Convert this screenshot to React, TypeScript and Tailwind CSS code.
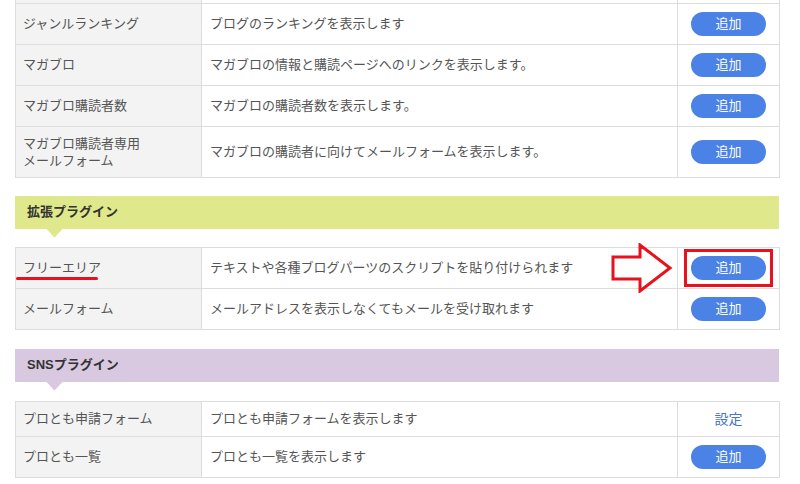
import React from 'react';

type Row = {
  name: React.ReactNode;
  desc: string;
  action: 'add' | 'setting';
  highlight?: boolean;
};

const AddButton = ({ highlight = false }: { highlight?: boolean }) => (
  <span className="relative block">
    <button className="block w-[75px] h-[24px] rounded-full bg-[#4b82e6] text-white text-[13px] leading-[24px]">
      追加
    </button>
    {highlight && (
      <span className="absolute -inset-[7px] border-[3px] border-[#e8121e]" />
    )}
  </span>
);

const Arrow = () => (
  <svg
    className="absolute right-[4px] top-1/2 -translate-y-1/2"
    width="62"
    height="50"
    viewBox="0 0 62 50"
  >
    <polygon
      points="2,14 29,14 29,2 59,25 29,48 29,36 2,36"
      fill="#fff"
      stroke="#e8121e"
      strokeWidth="3"
      strokeLinejoin="miter"
    />
  </svg>
);

const PluginTable = ({ rows, sliver = false }: { rows: Row[]; sliver?: boolean }) => (
  <table className="w-[764px] table-fixed border-collapse text-[13px] leading-[17px] text-[#555]">
    <colgroup>
      <col className="w-[186px]" />
      <col className="w-[476px]" />
      <col className="w-[102px]" />
    </colgroup>
    <tbody>
      {sliver && (
        <tr>
          <td className="h-[3px] p-0 bg-[#f3f3f3] border-x border-[#ddd]" />
          <td className="h-[3px] p-0 border-x border-[#ddd]" />
          <td className="h-[3px] p-0 border-x border-[#ddd]" />
        </tr>
      )}
      {rows.map((row, i) => (
        <tr key={i}>
          <td className="border border-[#ddd] bg-[#f3f3f3] px-[7px] py-2 align-middle">
            {row.name}
          </td>
          <td className="relative border border-[#ddd] px-2 py-2 align-middle">
            {row.desc}
            {row.highlight && <Arrow />}
          </td>
          <td className="border border-[#ddd] py-2 align-middle">
            <div className="flex justify-center">
              {row.action === 'add' ? (
                <AddButton highlight={row.highlight} />
              ) : (
                <span className="block text-[14px] leading-[18px] text-[#4a72c4]">設定</span>
              )}
            </div>
          </td>
        </tr>
      ))}
    </tbody>
  </table>
);

const SectionHeader = ({ title, className }: { title: string; className: string }) => (
  <div className={`relative h-[33px] w-[764px] pl-3 flex items-center ${className}`}>
    <h2 className="text-[13px] font-bold text-[#333]">{title}</h2>
    <span className="absolute left-[31px] top-full h-[9px] w-[17px] bg-inherit [clip-path:polygon(0_0,100%_0,50%_100%)]" />
  </div>
);

export default function App() {
  const topRows: Row[] = [
    { name: 'ジャンルランキング', desc: 'ブログのランキングを表示します', action: 'add' },
    { name: 'マガブロ', desc: 'マガブロの情報と購読ページへのリンクを表示します。', action: 'add' },
    { name: 'マガブロ購読者数', desc: 'マガブロの購読者数を表示します。', action: 'add' },
    {
      name: (
        <>
          マガブロ購読者専用
          <br />
          メールフォーム
        </>
      ),
      desc: 'マガブロの購読者に向けてメールフォームを表示します。',
      action: 'add',
    },
  ];

  const extRows: Row[] = [
    {
      name: (
        <span className="relative">
          フリーエリア
          <span className="absolute left-[-7px] bottom-[-5px] h-[3px] w-[82px] rounded-full bg-[#e8121e]" />
        </span>
      ),
      desc: 'テキストや各種ブログパーツのスクリプトを貼り付けられます',
      action: 'add',
      highlight: true,
    },
    { name: 'メールフォーム', desc: 'メールアドレスを表示しなくてもメールを受け取れます', action: 'add' },
  ];

  const snsRows: Row[] = [
    { name: 'プロとも申請フォーム', desc: 'プロとも申請フォームを表示します', action: 'setting' },
    { name: 'プロとも一覧', desc: 'プロとも一覧を表示します', action: 'add' },
  ];

  return (
    <div className="min-h-[484px] bg-white pl-[15px] font-['Liberation_Sans','Noto_Sans_CJK_JP',sans-serif]">
      <PluginTable rows={topRows} sliver />
      <SectionHeader title="拡張プラグイン" className="mt-[18px] bg-[#dfe88a]" />
      <div className="mt-[18px]">
        <PluginTable rows={extRows} />
      </div>
      <SectionHeader title="SNSプラグイン" className="mt-[19px] bg-[#d9c9e0]" />
      <div className="mt-[19px]">
        <PluginTable rows={snsRows} />
      </div>
    </div>
  );
}
